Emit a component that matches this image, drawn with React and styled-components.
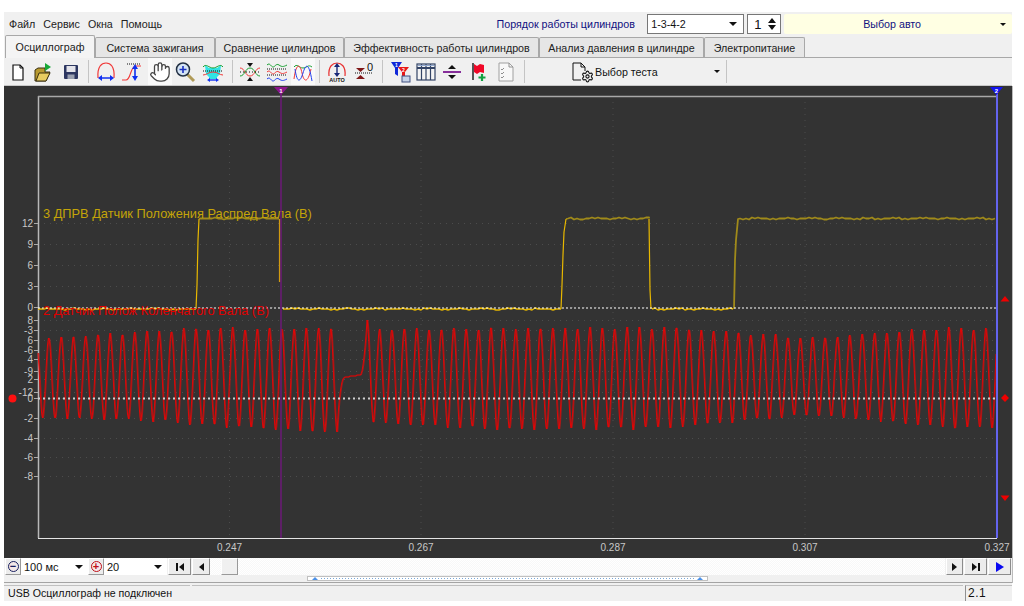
import React from 'react';
import styled, { createGlobalStyle } from 'styled-components';
import { Hand, Settings } from 'lucide-react';

const GlobalStyle = createGlobalStyle`
    html, body {
        margin: 0;
        padding: 0;
        background: #fff;
        font-family: "Liberation Sans", Arial, sans-serif;
        color: #111;
    }
`

// ---- signal data, in page pixels

const lerpTable = (table, x) => {
    for (let i = 0; i < table.length - 1; i++) {
        const [x0, y0] = table[i];
        const [x1, y1] = table[i + 1];
        if (x <= x1) return y0 + (y1 - y0) * Math.max(0, x - x0) / (x1 - x0);
    }
    return table[table.length - 1][1];
}

const leftTop = [[38, 338], [60, 337], [200, 328], [330, 328]];
const leftBottom = [[38, 418], [130, 420], [250, 428], [337, 433]];
const rightTop = [[367, 320], [379, 329], [670, 327], [810, 338], [850, 335], [935, 328], [997, 328]];
const rightBottom = [[373, 423], [500, 430], [670, 428], [810, 415], [950, 428], [997, 428]];

// mostly sine, a little triangle: the traced peaks are a bit sharper than a pure sine
const sharpCos = (a) => {
    const c = Math.cos(a);
    return 0.8 * c + 0.2 * (Math.asin(c) * 2 / Math.PI);
}

const redY = (x) => {
    const noise = Math.sin(x * 1.7) * 0.7 + Math.sin(x * 0.37) * 0.8;
    if (x <= 337) {
        const top = lerpTable(leftTop, x);
        const bottom = lerpTable(leftBottom, x);
        const c = sharpCos(2 * Math.PI * (x - 48.7) / 12.26);
        return (top + bottom) / 2 - (bottom - top) / 2 * c + noise;
    }
    if (x <= 346) {
        const t = (x - 337) / 9;
        return 377 + 56 * Math.pow(1 - t, 3);
    }
    if (x <= 360) return 377 - (x - 346) * 0.15;
    if (x <= 367) {
        const t = (x - 360) / 7;
        return 375 - 55 * t * t;
    }
    const top = lerpTable(rightTop, x);
    const bottom = lerpTable(rightBottom, x);
    const c = sharpCos(2 * Math.PI * (x - 367) / 12.374);
    return (top + bottom) / 2 - (bottom - top) / 2 * c + noise;
}

const redPoints = () => {
    const pts = [];
    for (let x = 38; x <= 996; x += 0.5) {
        pts.push(`${x},${Math.round(redY(x))}`);
    }
    return pts.join(' ');
}

const flatRun = (from, to, level, spread) => {
    const pts = [];
    for (let x = from; x <= to; x += 3) {
        pts.push([x, level + Math.round(Math.sin(x * 0.9) * spread + Math.sin(x * 0.23) * spread)]);
    }
    pts.push([to, level]);
    return pts;
}

const toPoints = (pts) => pts.map((p) => p.join(',')).join(' ');

const yellowHigh = [
    [[199, 219], ...flatRun(200, 279, 218.5, 0.4)],
    [[566, 219], ...flatRun(568, 649, 218.5, 0.7)],
    [[734, 309], [735, 260], [736, 240], [738, 219], ...flatRun(740, 995, 218.5, 0.5)],
];

const yellowLow = [
    flatRun(38, 196, 309, 0.4),
    flatRun(283, 561, 309, 0.5),
    flatRun(652, 733, 309, 0.5),
];

const yellowEdges = [
    [[196, 309], [197, 285], [198, 240], [199, 219]],
    [[561, 309], [562, 285], [563, 255], [564, 232], [566, 219]],
    [[649, 219], [650, 290], [651, 309]],
];

const yellowTicks = [[12, 223], [9, 244], [6, 265], [3, 286], [0, 307]];
const mixedTicks = [[-3, 330], [-6, 350], [-9, 371], [-12, 392]];
const redTicks = [[8, 320], [6, 340], [4, 359], [2, 379], [0, 398], [-2, 418], [-4, 438], [-6, 457], [-8, 476]];
const timeTicks = [['0.247', 229.5], ['0.267', 421], ['0.287', 613], ['0.307', 805], ['0.327', 997]];

const Scope = () => {
    const rows = [...yellowTicks, ...mixedTicks, ...redTicks];
    const red = redPoints();
    return (
        <Chart viewBox="4 86 1008 472" width="1008" height="472">
            {rows.map(([, y]) => (
                <GridLine key={y} x1="38" x2="997" y1={y + 0.5} y2={y + 0.5} />
            ))}
            {timeTicks.slice(0, 4).map(([, x]) => (
                <GridLine key={x} x1={x} x2={x} y1="96" y2="538" />
            ))}
            {/* frame */}
            <FrameLine x1="38.5" y1="96" x2="38.5" y2="538" $c="#b8b8b8" $w="1.5" />
            <FrameLine x1="38" y1="96.5" x2="997" y2="96.5" $c="#a8a8a8" $w="1.5" />
            <FrameLine x1="38" y1="538.5" x2="997" y2="538.5" $c="#e4e4e4" $w="1" />

            {rows.map(([label, y]) => (
                <g key={`t${y}`}>
                    <FrameLine x1="34" x2="38" y1={y + 0.5} y2={y + 0.5} $c="#aaa" $w="1" />
                    <AxisText x="33" y={y + 4} textAnchor="end">{label}</AxisText>
                </g>
            ))}
            {timeTicks.map(([label, x]) => (
                <AxisText key={label} x={x} y="551" textAnchor="middle">{label}</AxisText>
            ))}

            {/* signals */}
            <Trace points={red} $c="#9c1c1c" $w="1" transform="translate(0.8 0)" />
            <Trace points={red} $c="#f40000" $w="0.9" />
            {yellowHigh.map((p, i) => <Trace key={i} points={toPoints(p)} $c="#a08a1a" $w="1.8" />)}
            {yellowLow.map((p, i) => <Trace key={i} points={toPoints(p)} $c="#e8b800" $w="1.4" />)}
            {yellowEdges.map((p, i) => <Trace key={i} points={toPoints(p)} $c="#e8b800" $w="1.2" />)}

            <DotLine x1="38" x2="997" y1="308" y2="308" $c="#ffffff" $w="1" $dash="2 2" />
            <DotLine x1="38" x2="997" y1="398.5" y2="398.5" $c="#cfcfcf" $w="2" $dash="2 3" />

            <ChannelText x="43" y="218" $c="#c4a408">3 ДПРВ Датчик Положения Распред Вала (В)</ChannelText>
            <ChannelText x="43" y="315" $c="#e00000">2 Датчик Полож Коленчатого Вала (В)</ChannelText>

            {/* cursors */}
            <FrameLine x1="281" x2="281" y1="90" y2="538" $c="#6c1a78" $w="1.5" />
            <Trace points="279.5,219 279.5,282" $c="#d09a10" $w="1.2" />
            <polygon points="274,87 288,87 281,95" fill="#8c148c" />
            <CursorDigit x="281" y="93" textAnchor="middle">1</CursorDigit>
            <FrameLine x1="997" x2="997" y1="90" y2="538" $c="#6464ee" $w="2" />
            <polygon points="990,87 1003,87 996.5,95" fill="#1414ee" />
            <CursorDigit x="996.5" y="93" textAnchor="middle">2</CursorDigit>

            {/* level markers */}
            <circle cx="12.5" cy="398.5" r="4" fill="#ff1010" />
            <polygon points="1000.5,301.5 1009.5,301.5 1005,296" fill="#f00000" />
            <polygon points="1005,394 1009,398 1005,402 1001,398" fill="#f00000" />
            <polygon points="1000.5,495.5 1009.5,495.5 1005,501" fill="#f00000" />
        </Chart>
    )
}

// ---- toolbar drawings

const Svg = ({ children }) => <svg width="22" height="22" viewBox="0 0 22 22" fill="none">{children}</svg>;

const NewIcon = () => (
    <Svg>
        <path d="M6 4h7l3 3v12H6z" fill="#fff" stroke="#111" strokeWidth="1.2" />
        <path d="M13 4v3h3" stroke="#111" />
    </Svg>
)
const OpenIcon = () => (
    <Svg>
        <path d="M2 9l3-2h7v4h5l-4 9H2z" fill="#b89a30" stroke="#3a3010" />
        <path d="M3 20l3-8h11l-4 8z" fill="#e8cc60" stroke="#3a3010" />
        <path d="M12 2l6 4-6 4z" fill="#18a838" />
    </Svg>
)
const SaveIcon = () => (
    <Svg>
        <rect x="4" y="4" width="14" height="14" rx="1" fill="#2c3660" />
        <rect x="6.500" y="5" width="9" height="6" fill="#e4e4ea" />
        <rect x="7.500" y="13.500" width="7" height="4.500" fill="#9aa0b0" />
    </Svg>
)
const BlueHArrow = ({ y }) => (
    <>
        <path d={`M6 ${y}h10`} stroke="#1030f0" strokeWidth="1.5" />
        <path d={`M3 ${y}l4-3v6zM19 ${y}l-4-3v6z`} fill="#1030f0" />
    </>
)
const WidthIcon = () => (
    <Svg>
        <path d="M3 17C2 5 7 2 11 2s9 3 8 15" stroke="#f03838" strokeWidth="1.2" />
        <BlueHArrow y={17} />
    </Svg>
)
const HeightIcon = () => (
    <Svg>
        <path d="M6 3h14" stroke="#111" strokeDasharray="1 1" />
        <path d="M1 19h4c5 0 4-14 10-14h5" stroke="#f03838" strokeWidth="1.1" />
        <path d="M14 7v10" stroke="#1030f0" strokeWidth="1.6" />
        <path d="M14 3l-3 5h6zM14 20l-3-5h6z" fill="#1030f0" />
    </Svg>
)
const ZoomIcon = () => (
    <Svg>
        <path d="M13 13l7 7" stroke="#b09a58" strokeWidth="3" />
        <circle cx="9" cy="8.5" r="6.5" fill="#d4e4f4" stroke="#223044" strokeWidth="1.5" />
        <path d="M5.5 8.500h7M9 5v7" stroke="#1830c0" strokeWidth="1.6" />
    </Svg>
)
const BandIcon = () => (
    <Svg>
        <path d="M3 4l4 3h8l4-3-1 9-3 3v2H7v-2l-3-3z" fill="#30e4e4" />
        <path d="M1 6c3-4 6 1 10 1s7-5 10-1" stroke="#18a030" />
        <path d="M1 10h20" stroke="#111" strokeDasharray="1 1" />
        <path d="M1 14c4 0 5-3 10-3s6 3 10 3" stroke="#f03838" />
        <path d="M7 19h8" stroke="#1030f0" strokeWidth="1.4" />
        <path d="M5 19l3-2v4zM17 19l-3-2v4z" fill="#1030f0" />
    </Svg>
)
const CrossIcon = () => (
    <Svg>
        <path d="M1 7c5 0 5 8 10 8s5-8 10-8" stroke="#f03838" strokeWidth="1" />
        <path d="M1 15c5 0 5-8 10-8s5 8 10 8" stroke="#18a030" strokeWidth="1" />
        <path d="M8 2h6l-3 4zM8 20h6l-3-4z" fill="#111" />
        <path d="M1 11h20" stroke="#111" strokeDasharray="1 2" />
    </Svg>
)
const RowsIcon = () => (
    <Svg>
        <path d="M1 4c3-3 4 2 6 2s3-4 6-2 4 2 8 0" stroke="#18a030" strokeWidth="1" />
        <path d="M1 8h20M1 14h20" stroke="#111" strokeDasharray="1 1" />
        <path d="M1 11c3-3 4 2 6 2s3-4 6-2 4 2 8 0" stroke="#f03838" strokeWidth="1" />
        <path d="M1 18c3-3 4 2 6 2s3-4 6-2 4 2 8 0" stroke="#2040f0" strokeWidth="1" />
    </Svg>
)
const OverlayIcon = () => (
    <Svg>
        <path d="M2 6c3-4 5 1 9 1s5-4 9-1" stroke="#18a030" strokeWidth="1" />
        <path d="M2 18C4 2 8 2 10 12s6 10 9-4" stroke="#f03838" strokeWidth="1" />
        <path d="M3 8c2 14 5 14 8 4s6-10 9 8" stroke="#2040f0" strokeWidth="1" />
    </Svg>
)
const AutoIcon = () => (
    <Svg>
        <path d="M3 15C2 5 7 2 11 2s9 3 8 13" stroke="#e83030" strokeWidth="1.2" />
        <path d="M11 5v8" stroke="#182878" strokeWidth="1.4" />
        <path d="M11 2l-3 4h6zM11 16l-3-4h6z" fill="#182878" />
        <AutoText x="11" y="21" textAnchor="middle">AUTO</AutoText>
    </Svg>
)
const ZeroIcon = () => (
    <Svg>
        <path d="M2 12h18" stroke="#111" strokeDasharray="1 1" />
        <path d="M3 7h9l-4.500 4zM3 18h9l-4.500-4z" fill="#801818" />
        <ZeroText x="14" y="10">0</ZeroText>
    </Svg>
)
const FilterIcon = () => (
    <Svg>
        <path d="M2 1h11l-4 6v8l-3-2V7z" fill="#1028d8" />
        <path d="M9 6h11l-4 5v6l-3-2v-4z" fill="#e81818" />
        <rect x="13" y="15" width="8" height="6" fill="#c8d4e8" stroke="#405080" />
        <FilterDigit x="7.500" y="6" textAnchor="middle">1</FilterDigit>
        <FilterDigit x="14.500" y="10.500" textAnchor="middle">2</FilterDigit>
    </Svg>
)
const TableIcon = () => (
    <Svg>
        <rect x="2" y="3" width="18" height="16" fill="#f4f4f4" stroke="#334466" strokeWidth="1.2" />
        <path d="M2 7h18" stroke="#334466" strokeWidth="2" />
        <path d="M6.500 3v16M11 3v16M15.500 3v16" stroke="#334466" strokeWidth="1.2" />
        <path d="M3 4.500h16" stroke="#8fa8d0" />
    </Svg>
)
const SplitIcon = () => (
    <Svg>
        <path d="M2 11h18" stroke="#7a1890" strokeWidth="1.8" />
        <path d="M11 4l-4 4h8zM11 18l-4-4h8z" fill="#111" />
    </Svg>
)
const FlagIcon = () => (
    <Svg>
        <path d="M5 2v17" stroke="#222" strokeWidth="1.5" />
        <path d="M6 3l3 2 3-2 4 1v8l-4-1-3 2-3-2z" fill="#f00828" />
        <path d="M14 13v7M10.500 16.500h7" stroke="#10a040" strokeWidth="2.2" />
    </Svg>
)
const ChecklistIcon = () => (
    <Svg>
        <path d="M4 2h10l4 4v14H4z" fill="#f8f8f8" stroke="#a0a0a0" />
        <path d="M14 2v4h4M6 8l1 1 2-2M6 12l1 1 2-2M6 16l1 1 2-2" stroke="#909090" />
    </Svg>
)
const TestIcon = () => (
    <TestDrawing>
        <svg width="22" height="22" viewBox="0 0 22 22" fill="none">
            <path d="M10 19H2V2h8l4 4v4M10 2v4h4" stroke="#111" />
        </svg>
        <GearWrap><Settings size={13} color="#111" /></GearWrap>
    </TestDrawing>
)

const toolGroups = [
    [
        { icon: <NewIcon />, w: 26 },
        { icon: <OpenIcon />, w: 26 },
        { icon: <SaveIcon />, w: 27 },
    ],
    [
        { icon: <WidthIcon />, w: 26 },
        { icon: <HeightIcon />, w: 26 },
        { icon: <Hand size={22} fill="#fff" color="#444" strokeWidth={1.4} />, w: 24, on: true, before: 3 },
        { icon: <ZoomIcon />, w: 26 },
        { icon: <BandIcon />, w: 30 },
    ],
    [
        { icon: <CrossIcon />, w: 26 },
        { icon: <RowsIcon />, w: 28 },
        { icon: <OverlayIcon />, w: 24, on: true },
    ],
    [
        { icon: <AutoIcon />, w: 26 },
        { icon: <ZeroIcon />, w: 28 },
    ],
    [
        { icon: <FilterIcon />, w: 26 },
        { icon: <TableIcon />, w: 26 },
        { icon: <SplitIcon />, w: 26 },
        { icon: <FlagIcon />, w: 28 },
        { icon: <ChecklistIcon />, w: 26 },
    ],
];

const tabs = [
    { label: 'Система зажигания', w: 120 },
    { label: 'Сравнение цилиндров', w: 129 },
    { label: 'Эффективность работы цилиндров', w: 195 },
    { label: 'Анализ давления в цилиндре', w: 165 },
    { label: 'Электропитание', w: 101 },
];

function App() {
    return (
        <>
            <GlobalStyle />
            <Window>
                <MenuRow>
                    <MenuItems>
                        <span>Файл</span>
                        <span>Сервис</span>
                        <span>Окна</span>
                        <span>Помощь</span>
                    </MenuItems>
                    <OrderLabel>Порядок работы цилиндров</OrderLabel>
                    <OrderCombo>
                        1-3-4-2
                        <ComboArrow />
                    </OrderCombo>
                    <Spinner>
                        1
                        <SpinArrows>
                            <SpinUp />
                            <SpinDown />
                        </SpinArrows>
                    </Spinner>
                    <CarCombo>
                        <CarLabel>Выбор авто</CarLabel>
                        <SmallArrow />
                    </CarCombo>
                </MenuRow>

                <TabRow>
                    <ActiveTab>Осциллограф</ActiveTab>
                    {tabs.map((t) => (
                        <Tab key={t.label} $w={t.w}>{t.label}</Tab>
                    ))}
                </TabRow>

                <Toolbar>
                    {toolGroups.map((group, i) => (
                        <React.Fragment key={i}>
                            {group.map((tool, j) => (
                                <ToolButton key={j} $w={tool.w} $on={tool.on} $before={tool.before}>
                                    {tool.icon}
                                </ToolButton>
                            ))}
                            <Divider $wide={i === 4} />
                        </React.Fragment>
                    ))}
                    <TestButton>
                        <TestIcon />
                        <TestLabel>Выбор теста</TestLabel>
                        <SmallArrow />
                    </TestButton>
                    <Divider />
                </Toolbar>

                <Plot>
                    <Scope />
                </Plot>

                <Controls>
                    <RoundButton><RoundMark $c="#182060">−</RoundMark></RoundButton>
                    <ValueCombo $w={67}>
                        100 мс
                        <ComboArrow />
                    </ValueCombo>
                    <RoundButton><RoundMark $c="#c01018">+</RoundMark></RoundButton>
                    <ValueCombo $w={63}>
                        20
                        <ComboArrow />
                    </ValueCombo>
                    <StepButton $w={23}><BarMark /><LeftMark /></StepButton>
                    <StepButton $w={18}><LeftMark /></StepButton>
                    <ScrollTrack>
                        <ScrollThumb />
                    </ScrollTrack>
                    <StepButton $w={17}><RightMark /></StepButton>
                    <StepButton $w={23}><RightMark /><BarMark /></StepButton>
                    <StepButton $w={23}><RightMark $c="#0808f0" $big /></StepButton>
                </Controls>

                <SplitStrip>
                    <SplitHandle>
                        <HandleUp />
                        <HandleDots />
                        <HandleUp />
                    </SplitHandle>
                </SplitStrip>

                <StatusBar>
                    <StatusCell $w={186}>USB Осциллограф не подключен</StatusCell>
                    <StatusCell $grow />
                    <VersionCell>2.1</VersionCell>
                </StatusBar>
            </Window>
        </>
    )
}

export default App

const Window = styled.div`
    width: 1008px;
    height: 589px;
    margin: 12px 0 0 4px;
    background: #f0f0f0;
    display: flex;
    flex-direction: column;
    font-size: 10.7px;
`
const MenuRow = styled.div`
    height: 24px;
    display: flex;
    align-items: center;
`
const MenuItems = styled.div`
    display: flex;
    gap: 8px;
    margin-left: 5px;
    width: 488px;
    color: #222;
`
const OrderLabel = styled.div`
    width: 151px;
    color: #101080;
`
const OrderCombo = styled.div`
    width: 97px;
    height: 20px;
    box-sizing: border-box;
    background: #fff;
    border: 1px solid #777;
    padding-left: 3px;
    display: flex;
    align-items: center;
    justify-content: space-between;
    padding-right: 6px;
`
const ComboArrow = styled.span`
    width: 0;
    height: 0;
    border-left: 4px solid transparent;
    border-right: 4px solid transparent;
    border-top: 4px solid #111;
`
const SmallArrow = styled.span`
    width: 0;
    height: 0;
    border-left: 3px solid transparent;
    border-right: 3px solid transparent;
    border-top: 3px solid #111;
`
const Spinner = styled.div`
    width: 34px;
    height: 20px;
    box-sizing: border-box;
    margin-left: 3px;
    background: #fff;
    border: 1px solid #777;
    padding: 0 4px 0 6px;
    font-size: 13px;
    display: flex;
    align-items: center;
    justify-content: space-between;
`
const SpinArrows = styled.span`
    display: flex;
    flex-direction: column;
    gap: 2px;
`
const SpinUp = styled.span`
    width: 0;
    height: 0;
    border-left: 4px solid transparent;
    border-right: 4px solid transparent;
    border-bottom: 5px solid #111;
`
const SpinDown = styled(SpinUp)`
    border-bottom: 0;
    border-top: 5px solid #111;
`
const CarCombo = styled.div`
    width: 228px;
    height: 20px;
    box-sizing: border-box;
    margin-left: 3px;
    background: #ffffe3;
    border-radius: 2px;
    padding-right: 6px;
    display: flex;
    align-items: center;
`
const CarLabel = styled.div`
    flex: 1;
    text-align: center;
    color: #101080;
`
const TabRow = styled.div`
    height: 22px;
    margin-left: 1px;
    display: flex;
    align-items: flex-end;
    position: relative;
    z-index: 1;
    border-bottom: 1px solid #a8a8a8;
    box-sizing: border-box;
`
const Tab = styled.div`
    width: ${(p) => p.$w}px;
    height: 20px;
    box-sizing: border-box;
    display: flex;
    align-items: center;
    justify-content: center;
    background: #e6e6e6;
    border: 1px solid #a8a8a8;
    border-bottom: 0;
    border-radius: 2px 2px 0 0;
    color: #222;
`
const ActiveTab = styled(Tab)`
    width: 90px;
    height: 23px;
    margin-bottom: -1px;
    background: #f4f4f4;
`
const Toolbar = styled.div`
    height: 28px;
    box-sizing: border-box;
    padding-left: 1px;
    display: flex;
    align-items: stretch;
    border-bottom: 1px solid #c8c8c8;
`
const ToolButton = styled.div`
    width: ${(p) => p.$w}px;
    margin-left: ${(p) => p.$before || 0}px;
    display: flex;
    align-items: center;
    justify-content: center;
    background: ${(p) => (p.$on ? '#f9f9f9' : 'transparent')};
`
const Divider = styled.div`
    width: 1px;
    background: #c4c4c4;
    margin: 2px ${(p) => (p.$wide ? 5 : 4)}px;
`
const TestButton = styled.div`
    width: 192px;
    box-sizing: border-box;
    padding: 0 2px 0 41px;
    display: flex;
    align-items: center;
`
const TestDrawing = styled.div`
    width: 24px;
    height: 22px;
    position: relative;
`
const GearWrap = styled.div`
    position: absolute;
    right: 1px;
    bottom: 0;
    line-height: 0;
`
const TestLabel = styled.div`
    flex: 1;
    padding-left: 0;
`
const Plot = styled.div`
    height: 472px;
    background: #333;
    line-height: 0;
    box-shadow: 1px 0 0 #bbb;
`
const Chart = styled.svg`
    display: block;
    font-family: "Liberation Sans", Arial, sans-serif;
`
const GridLine = styled.line`
    stroke: #4c4c4c;
    stroke-width: 1;
    stroke-dasharray: 1 5;
`
const FrameLine = styled.line`
    stroke: ${(p) => p.$c};
    stroke-width: ${(p) => p.$w};
`
const DotLine = styled(FrameLine)`
    stroke-dasharray: ${(p) => p.$dash};
`
const Trace = styled.polyline`
    fill: none;
    stroke: ${(p) => p.$c};
    stroke-width: ${(p) => p.$w};
    stroke-linejoin: round;
`
const AxisText = styled.text`
    fill: #c8c8c8;
    font-size: 10px;
`
const ChannelText = styled.text`
    fill: ${(p) => p.$c};
    font-size: 12.8px;
`
const CursorDigit = styled.text`
    fill: #fff;
    font-size: 6px;
    font-weight: bold;
`
const AutoText = styled.text`
    fill: #111;
    font-size: 5.5px;
    font-weight: bold;
`
const ZeroText = styled.text`
    fill: #111;
    font-size: 11px;
`
const FilterDigit = styled.text`
    fill: #fff;
    font-size: 5px;
    font-weight: bold;
`
const Controls = styled.div`
    height: 17px;
    display: flex;
    align-items: stretch;
    padding-left: 1px;
    padding-right: 1px;
    box-shadow: 1px 0 0 #bbb;
`
const RoundButton = styled.div`
    width: 16px;
    box-sizing: border-box;
    border: 1px solid;
    border-color: #fff #999 #999 #fff;
    background: #ececec;
    display: flex;
    align-items: center;
    justify-content: center;
`
const RoundMark = styled.span`
    width: 11px;
    height: 11px;
    box-sizing: border-box;
    border: 1.5px solid ${(p) => p.$c};
    border-radius: 50%;
    color: ${(p) => p.$c};
    background: #f4e8e8;
    font-size: 11px;
    font-weight: bold;
    line-height: 8px;
    text-align: center;
`
const ValueCombo = styled.div`
    width: ${(p) => p.$w}px;
    box-sizing: border-box;
    background: #fff;
    padding: 0 5px 0 3px;
    font-size: 11px;
    display: flex;
    align-items: center;
    justify-content: space-between;
`
const StepButton = styled.div`
    width: ${(p) => p.$w}px;
    box-sizing: border-box;
    border: 1px solid;
    border-color: #fff #8c8c8c #8c8c8c #fff;
    background: #ececec;
    display: flex;
    align-items: center;
    justify-content: center;
    gap: 1px;
    margin-left: 1px;
`
const LeftMark = styled.span`
    width: 0;
    height: 0;
    border-top: 4px solid transparent;
    border-bottom: 4px solid transparent;
    border-right: 5px solid #111;
`
const RightMark = styled.span`
    width: 0;
    height: 0;
    border-top: ${(p) => (p.$big ? 5 : 4)}px solid transparent;
    border-bottom: ${(p) => (p.$big ? 5 : 4)}px solid transparent;
    border-left: ${(p) => (p.$big ? 8 : 5)}px solid ${(p) => p.$c || '#111'};
`
const BarMark = styled.span`
    width: 2px;
    height: 8px;
    background: #111;
`
const ScrollTrack = styled.div`
    flex: 1;
    padding-left: 11px;
    background: repeating-conic-gradient(#f8f8f8 0 25%, #ffffff 0 50%) 0 0 / 2px 2px;
`
const ScrollThumb = styled.div`
    width: 17px;
    height: 100%;
    box-sizing: border-box;
    border: 1px solid;
    border-color: #fff #999 #999 #fff;
    background: #f0f0f0;
`
const SplitStrip = styled.div`
    height: 8px;
    box-sizing: border-box;
    padding: 1px 0 0 303px;
    border-bottom: 1px solid #a4a4a4;
    box-shadow: 1px 0 0 #bbb;
`
const SplitHandle = styled.div`
    width: 401px;
    height: 5px;
    box-sizing: border-box;
    border: 1px solid #c0c0c0;
    background: #fff;
    padding: 0 4px;
    display: flex;
    align-items: center;
    gap: 3px;
`
const HandleUp = styled.span`
    width: 0;
    height: 0;
    border-left: 3px solid transparent;
    border-right: 3px solid transparent;
    border-bottom: 3px solid #4a90e8;
`
const HandleDots = styled.span`
    flex: 1;
    height: 1px;
    background: repeating-linear-gradient(90deg, #7aa8d8 0 1px, transparent 1px 3px);
`
const StatusBar = styled.div`
    margin-top: 2px;
    height: 16px;
    display: flex;
    gap: 2px;
`
const StatusCell = styled.div`
    ${(p) => (p.$grow ? 'flex: 1;' : `width: ${p.$w}px;`)}
    box-sizing: border-box;
    border-top: 1px solid #c0c0c0;
    padding-left: 4px;
    font-size: 10.6px;
    line-height: 15px;
    white-space: nowrap;
`
const VersionCell = styled.div`
    width: 47px;
    box-sizing: border-box;
    border-left: 1px solid #909090;
    border-top: 1px solid #c0c0c0;
    padding-left: 2px;
    font-size: 12px;
    letter-spacing: 0.5px;
    line-height: 15px;
`
